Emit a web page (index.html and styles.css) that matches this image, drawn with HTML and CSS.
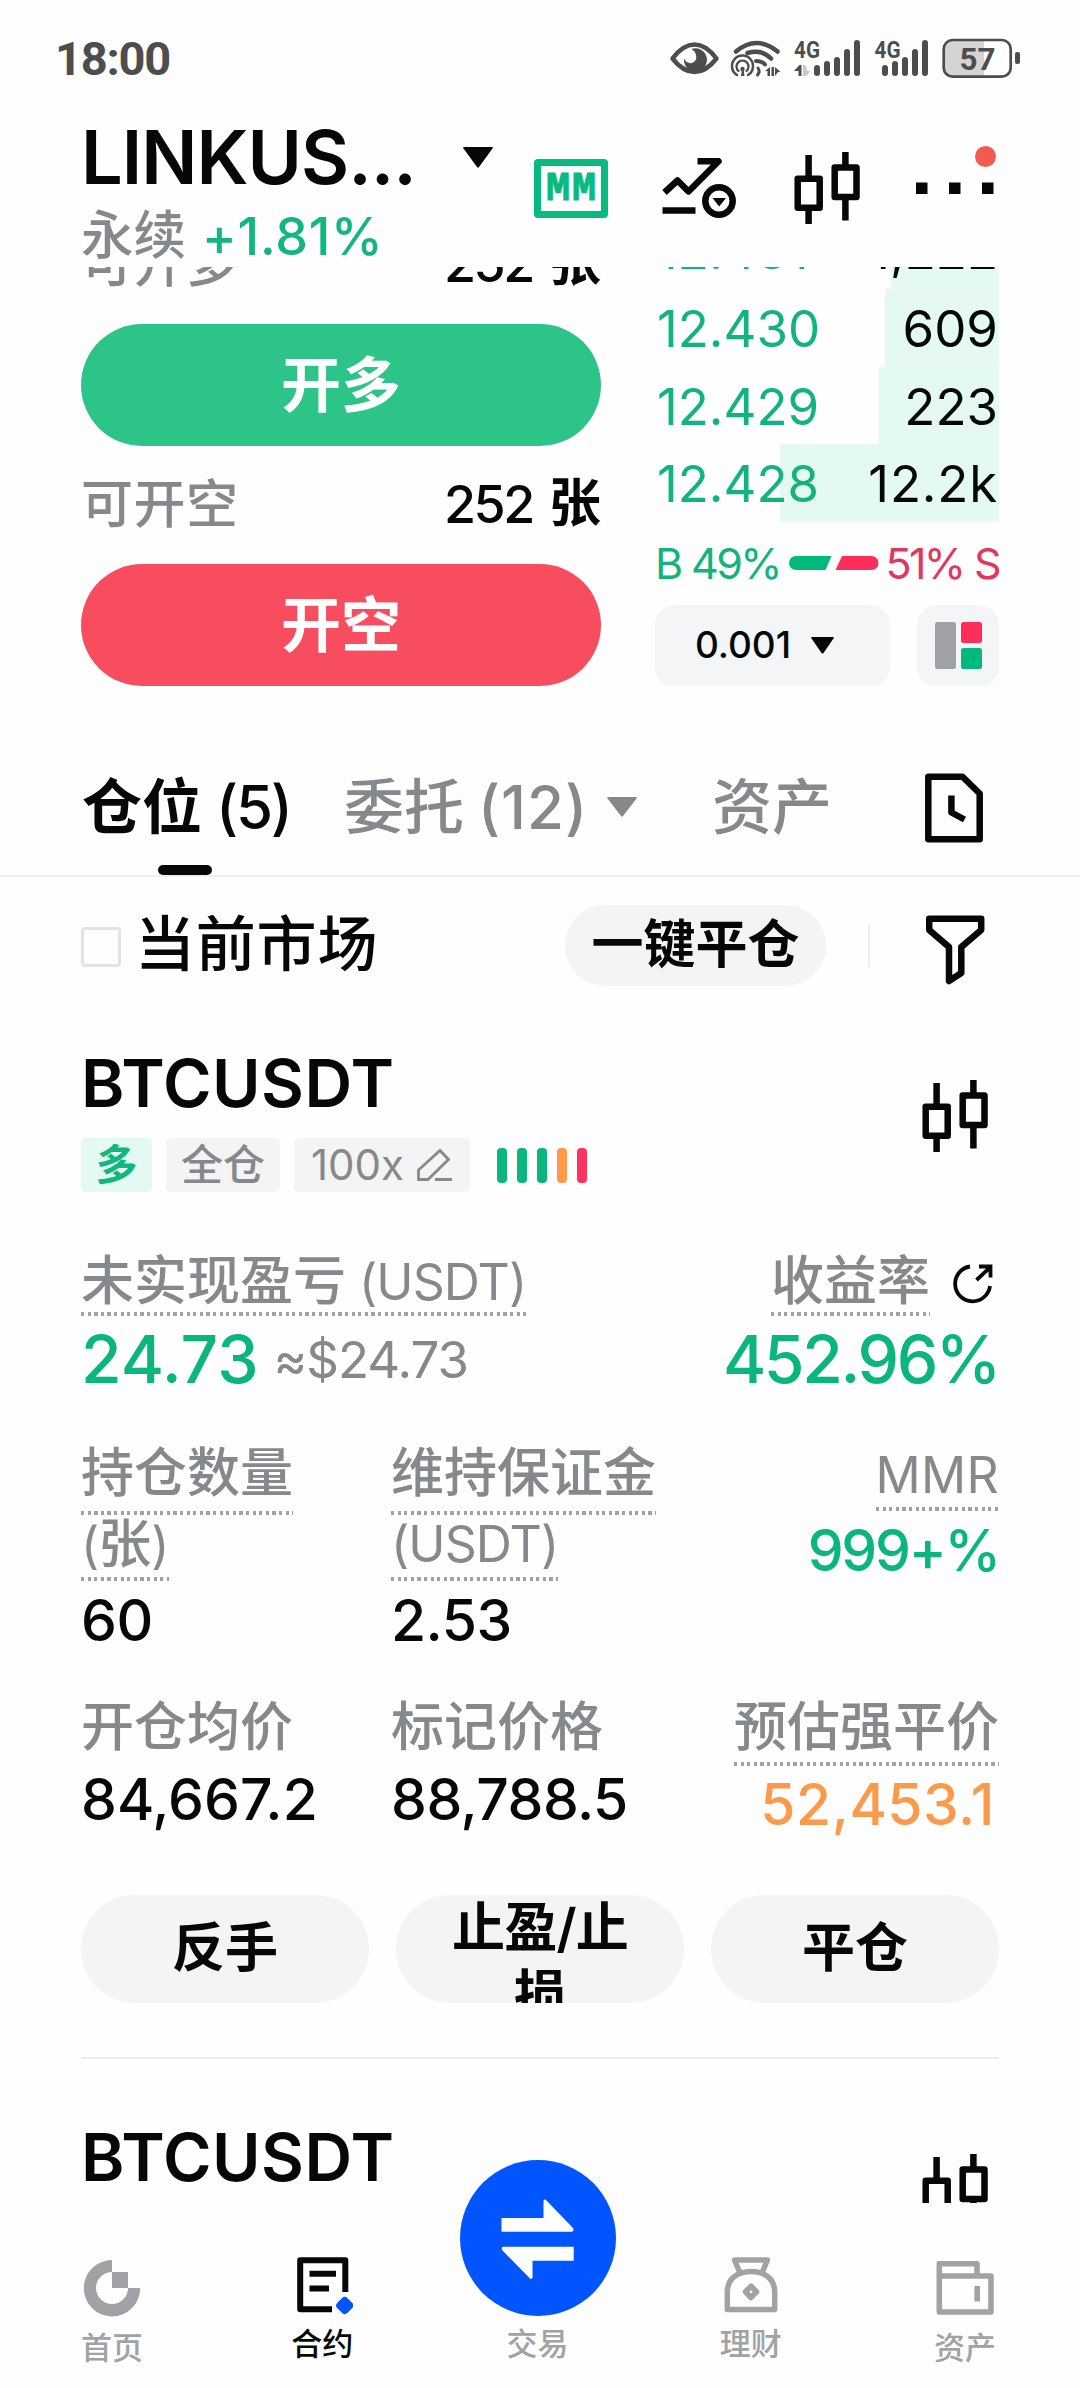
FILE: index.html
```html
<!DOCTYPE html>
<html lang="zh-CN">
<head>
<meta charset="utf-8">
<title>合约</title>
<link rel="stylesheet" href="styles.css">
</head>
<body>
<svg class="defs" width="0" height="0">
  <symbol id="candles" viewBox="794 152 66 72">
    <g fill="none" stroke="#050807" stroke-width="6.5" stroke-linejoin="round">
      <rect x="797.7" y="178.7" width="22" height="29"/>
      <rect x="834.7" y="167.4" width="21.8" height="29.6"/>
      <path d="M808.6 155v23M808.6 208v16M845.4 152v15M845.4 197v23.5"/>
    </g>
  </symbol>
</svg>
<div class="app">
  <div class="status">
    <span class="clock">18:00</span>
    <svg class="status-icons" width="352" height="44" viewBox="670 36 352 44">
      <g fill="none" stroke="#4d4d4d" stroke-linecap="round">
        <path d="M673.500 57.500Q684 43.500 695.500 43.500T717.500 57.500Q707 71 695.500 71T673.500 57.500Z" stroke-width="4.500" stroke-linejoin="round"/>
        <path d="M737 50.500Q757.500 33.500 778.500 50.500" stroke-width="4.500"/>
        <path d="M748.500 52Q763 48 772 57.500" stroke-width="4.500"/>
        <path d="M757 60Q763 60 766 63.500" stroke-width="4"/>
        <path d="M738 74A10.500 10.500 0 1 1 749 74" stroke-width="2.500"/>
        <path d="M739.500 70A6 6 0 1 1 747.500 70" stroke-width="2.300"/>
        <path d="M759 67q2.500 3.500-.5 7" stroke-width="3"/>
      </g>
      <g fill="#4d4d4d">
        <path d="M692.500 48A11.500 11.500 0 1 1 685 57.500Q688 63 693 62Q698.500 60 697 54Q696 50 692.500 48Z"/>
        <circle cx="743.500" cy="68" r="2.200"/>
        <path d="M743 68h1.500l1 7h-3.500zM766 70l5-4v9h-2.500v-5zM776 66l5.500 5h-2.500l-3 4zM772.500 66h2.500v9h-2.500zM795 70l5.500-6h2v11h-3v-5z"/>
        <path d="M804 64h2.500l2 6h3l-4 5h-3.500z" fill="#c9c9c9"/>
        <rect x="815" y="64" width="6" height="11" rx="3"/>
        <rect x="825" y="60" width="6" height="15" rx="3"/>
        <rect x="835" y="56" width="6" height="19" rx="3"/>
        <rect x="845" y="48" width="6" height="27" rx="3"/>
        <rect x="855" y="39" width="6" height="36" rx="3"/>
        <rect x="883" y="64" width="6" height="11" rx="3"/>
        <rect x="893" y="60" width="6" height="15" rx="3"/>
        <rect x="903" y="56" width="6" height="19" rx="3"/>
        <rect x="913" y="48" width="6" height="27" rx="3"/>
        <rect x="923" y="39" width="6" height="36" rx="3"/>
        <text x="795" y="56.500" class="net" textLength="26" lengthAdjust="spacingAndGlyphs">4G</text>
        <text x="875.500" y="56.500" class="net" textLength="26" lengthAdjust="spacingAndGlyphs">4G</text>
        <rect x="1016" y="51" width="5" height="12" rx="2"/>
      </g>
      <path d="M985 39.500H953a8 8 0 0 0-8 8V67a8 8 0 0 0 8 8h32z" fill="#d4d4d4"/>
      <rect x="944.700" y="39" width="67" height="36.700" rx="9" fill="none" stroke="#4d4d4d" stroke-width="2.700"/>
      <text x="960.500" y="69" class="battery" textLength="36" lengthAdjust="spacingAndGlyphs">57</text>
    </svg>
  </div>

  <header class="header">
    <div class="pair">
      <div class="pair-name">
        <h1>LINKUS...</h1>
        <svg width="30" height="21" viewBox="0 0 30 21"><path d="M1 0h28q1.500 0 .5 1.500L16 20q-1 1.500-2 0L.5 1.500Q-.5 0 1 0z" fill="#050807"/></svg>
      </div>
      <div class="pair-sub"><span class="muted">永续</span><span class="change">+1.81%</span></div>
    </div>
    <div class="mm">MM</div>
    <svg class="trend" width="74" height="60" viewBox="662 158 74 60">
      <g fill="none" stroke="#050807" stroke-width="6.500">
        <path d="M664.500 192.500L677.500 180.500L688.500 191.500L718.500 161.200H697.500" stroke-linejoin="round"/>
        <path d="M662.500 210.600h33"/>
        <circle cx="719" cy="201" r="13.700"/>
      </g>
      <path d="M712.500 198h13.500l-6.800 8.500z" fill="#050807"/>
    </svg>
    <svg class="head-candles" width="66" height="72"><use href="#candles"/></svg>
    <svg class="more" width="80" height="48" viewBox="916 146 80 48">
      <path d="M916 182.500h11.500v11.500h-11.500zM949 182.500h11.500v11.500h-11.500zM982 182.500h11.500v11.500h-11.500z" fill="#050807"/>
      <circle cx="985.500" cy="156.500" r="10.500" fill="#f35b50"/>
    </svg>
  </header>

  <main class="scroll">
    <section class="trade">
      <div class="order-form">
        <div class="avail"><span class="muted">可开多</span><span class="qty"><span>252</span><b>张</b></span></div>
        <button class="big long">开多</button>
        <div class="avail avail--short"><span class="muted">可开空</span><span class="qty"><span>252</span><b>张</b></span></div>
        <button class="big short">开空</button>
      </div>
      <div class="book">
        <div class="level d1"><span>12.431</span><span>1,222</span></div>
        <div class="level d2"><span>12.430</span><span>609</span></div>
        <div class="level d3"><span>12.429</span><span>223</span></div>
        <div class="level d4"><span>12.428</span><span class="k">12.2k</span></div>
        <div class="ratio">
          <span class="buy">B 49%</span>
          <svg width="90" height="14" viewBox="0 0 90 14"><path d="M7 0h35.500l-6 14H7A7 7 0 0 1 7 0z" fill="#00b97a"/><path d="M53 0h29.500a7 7 0 0 1 0 14H46.500z" fill="#ff2d5a"/></svg>
          <span class="sell">51% S</span>
        </div>
        <div class="book-tools">
          <div class="tick"><span>0.001</span><svg width="23" height="17" viewBox="0 0 23 17"><path d="M1 0h21q1.500 0 .5 1.500L12.500 16q-1 1-2 0L.5 1.500Q-.5 0 1 0z" fill="#050807"/></svg></div>
          <div class="view"><svg width="47" height="47" viewBox="0 0 47 47"><rect width="21" height="47" rx="2.500" fill="#9fa1a6"/><rect x="26" width="21" height="21" rx="2.500" fill="#ff2d5a"/><rect x="26" y="26" width="21" height="21" rx="2.500" fill="#00b97a"/></svg></div>
        </div>
      </div>
    </section>

    <nav class="tabs">
      <div class="tab active"><span>仓位</span><span class="n n5">(5)</span></div>
      <div class="tab orders"><span>委托</span><span class="n n12">(12)</span><svg width="30" height="20" viewBox="0 0 30 20"><path d="M1 0h28q1.500 0 .5 1.500L16 19q-1 1.500-2 0L.5 1.500Q-.5 0 1 0z" fill="#86898c"/></svg></div>
      <div class="tab assets"><span>资产</span></div>
      <svg class="history" width="59" height="70" viewBox="926 773 59 70"><g fill="none" stroke="#050807" stroke-width="6.500" stroke-linejoin="round"><path d="M929.300 776.700H963.500L980.700 793.500V839.200H929.300Z"/><path d="M952.400 795.500V812.500L965.500 819.500"/></g></svg>
    </nav>

    <div class="filters">
      <span class="check"></span><span class="cur">当前市场</span>
      <button class="close-all">一键平仓</button>
      <i class="sep"></i>
      <svg class="funnel" width="59" height="70" viewBox="926 915.500 59 70"><path d="M929.200 919.200H981.200V930.500L961.300 947.500V973.500L949 981.500V947.500L929.200 930.500Z" fill="none" stroke="#050807" stroke-width="6.500" stroke-linejoin="round"/></svg>
    </div>

    <article class="position">
      <div class="pos-head">
        <div>
          <h2>BTCUSDT</h2>
          <div class="tags">
            <span class="tag side">多</span>
            <span class="tag cross">全仓</span>
            <span class="tag lev"><span>100x</span><svg width="37" height="34" viewBox="418 1146 37 34"><path d="M420.500 1177.500V1168L442 1148.500L450.500 1157.500L430 1177.500ZM437 1177.500H454" fill="none" stroke="#86898c" stroke-width="2.800"/></svg></span>
            <span class="risk"><i></i><i></i><i></i><i class="o"></i><i class="r"></i></span>
          </div>
        </div>
        <svg class="card-candles" width="66" height="72"><use href="#candles"/></svg>
      </div>

      <div class="pnl">
        <div>
          <div class="label wide"><span class="dotted"><span>未实现盈亏</span><span class="lat g">(USDT)</span></span></div>
          <div class="pnl-value"><strong>24.73</strong><span class="approx">≈$24.73</span></div>
        </div>
        <div class="end">
          <div class="label wide"><span class="dotted">收益率</span><svg class="share" width="40" height="40" viewBox="953 1264 40 40"><path d="M970 1266.500A17.500 17.500 0 1 0 990 1286M976.500 1280L990 1267.500M979 1266.500H990.500V1277.500" fill="none" stroke="#050807" stroke-width="3.800"/></svg></div>
          <div class="pnl-value"><strong class="rate">452.96%</strong></div>
        </div>
      </div>

      <div class="grid g1">
        <div><div class="label two"><span class="dotted">持仓数量</span><br><span class="dotted"><span class="lat">(</span>张<span class="lat">)</span></span></div><div class="value">60</div></div>
        <div><div class="label two"><span class="dotted">维持保证金</span><br><span class="dotted lat">(USDT)</span></div><div class="value">2.53</div></div>
        <div class="end"><div class="label mmr"><span class="dotted lat">MMR</span></div><div class="value ok">999+%</div></div>
      </div>
      <div class="grid g2">
        <div><div class="label">开仓均价</div><div class="value entry">84,667.2</div></div>
        <div><div class="label">标记价格</div><div class="value">88,788.5</div></div>
        <div class="end"><div class="label liq"><span class="dotted">预估强平价</span></div><div class="value warn">52,453.1</div></div>
      </div>

      <div class="actions">
        <button><span>反手</span></button>
        <button class="tpsl"><span>止盈/止<br>损</span></button>
        <button><span>平仓</span></button>
      </div>
    </article>

    <article class="position next">
      <div class="pos-head">
        <h2>BTCUSDT</h2>
        <svg class="card-candles" width="66" height="72"><use href="#candles"/></svg>
      </div>
    </article>
  </main>

  <nav class="bottom">
    <a class="item low"><svg width="62" height="60" viewBox="82 2257 62 60"><path d="M113 2260A28.200 28.200 0 1 0 141.200 2288H129A16 16 0 1 1 113 2272Z" fill="#a0a2a5"/><path d="M113 2272h16v16h-16z" fill="#a0a2a5"/></svg><span>首页</span></a>
    <a class="item on"><svg width="62" height="60" viewBox="292 2257 62 60"><path d="M333 2309.200H301.200V2260.300H346.300V2292M310.500 2273.800H337M310.500 2288.500H330" fill="none" stroke="#050807" stroke-width="6" stroke-linejoin="round"/><path d="M345.700 2301l4.500 4.500l-4.500 4.500l-4.500-4.500z" fill="#0055ff" stroke="#0055ff" stroke-width="8" stroke-linejoin="round"/></svg><span>合约</span></a>
    <a class="item trade-item"><svg width="156" height="156" viewBox="461 2160 156 156"><circle cx="539" cy="2238" r="78" fill="#0055ff"/><path d="M502.500 2218H544.500V2201Q545.500 2198.500 547.500 2200.500L574 2228Q575.500 2231.700 572.500 2231.700H502.500ZM574.700 2246.700V2260.700H533.500V2277.500Q532.500 2280 530.500 2278L503.500 2250.500Q501.500 2246.700 504.500 2246.700Z" fill="#fff"/></svg><span>交易</span></a>
    <a class="item"><svg width="62" height="60" viewBox="721 2257 62 60"><path d="M728.300 2309.500V2292C728.300 2279 738 2271.500 752 2271.500S775.700 2279 775.700 2292V2309.500ZM741 2273L735.500 2260H768.500L763 2273M752 2286.200L757.500 2291.800L752 2297.500L746.500 2291.800Z" fill="none" stroke="#a0a2a5" stroke-width="5.500" stroke-linejoin="round"/></svg><span>理财</span></a>
    <a class="item low"><svg width="62" height="60" viewBox="935 2257 62 60"><path d="M940.300 2276V2312H992V2276ZM940.300 2276V2263.800H978V2276M978.200 2286V2301.500" fill="none" stroke="#a0a2a5" stroke-width="5.600" stroke-linejoin="round"/></svg><span>资产</span></a>
  </nav>
</div>
</body>
</html>
```
FILE: styles.css
```css
* { box-sizing: border-box; }
body {
  margin: 0;
  background: #fefefe;
  color: #050807;
  font-family: Inter, "Noto Sans CJK SC", sans-serif;
  line-height: 1.2;
}
h1, h2 { margin: 0; }
button {
  border: 0;
  padding: 0;
  font-family: inherit;
  line-height: inherit;
  color: inherit;
}
svg { display: block; flex: none; }
.defs { position: absolute; }
.app {
  display: flex;
  flex-direction: column;
  width: 1080px;
  height: 2388px;
  overflow: hidden;
}
.muted { color: #86898c; font-weight: 500; }

/* status bar */
.status {
  display: flex;
  justify-content: space-between;
  align-items: center;
  height: 110px;
  padding: 8px 59px 0 55px;
}
.clock {
  font: 700 47px/50px Roboto, sans-serif;
  letter-spacing: -1.200px;
  color: #4d4d4d;
}
.net { font: 700 24px Roboto, sans-serif; }
.battery { font: 700 32px Roboto, sans-serif; fill: #4d4d4d; }

/* header */
.header {
  display: flex;
  height: 157px;
  padding-left: 81px;
  flex: none;
}
.pair { width: 453px; }
.pair-name {
  display: flex;
  justify-content: space-between;
  align-items: center;
  height: 94px;
  padding-right: 41px;
}
.pair-name h1 { font-size: 74px; font-weight: 600; line-height: 94px; letter-spacing: -1px; }
.pair-sub { display: flex; gap: 16px; line-height: 63px; font-size: 52px; }
.pair-sub .muted { font-size: 52.500px; line-height: 63px; }
.change { color: #12b77e; font-weight: 500; letter-spacing: .8px; line-height: 65px; }
.mm {
  width: 74px;
  height: 59px;
  margin-top: 49px;
  border: 7px solid #07bb7f;
  border-radius: 4px;
  color: #07bb7f;
  font: 700 40px/47px "Liberation Mono", monospace;
  letter-spacing: 2px;
  padding-left: 2px;
  text-align: center;
  -webkit-text-stroke: 1px #07bb7f;
}
.trend { margin: 48px 0 0 54px; }
.head-candles { margin: 42px 0 0 58px; }
.more { margin: 36px 0 0 56px; }

.scroll { flex: 1; min-height: 0; overflow: hidden; }

/* order form and book */
.trade {
  display: flex;
  justify-content: space-between;
  height: 419px;
  padding: 0 81px;
  overflow: hidden;
}
.order-form { width: 520px; margin-top: -63px; }
.avail {
  display: flex;
  justify-content: space-between;
  align-items: center;
  height: 120px;
  font-size: 52px;
}
.avail .muted { letter-spacing: .5px; }
.avail--short { height: 118px; }
.qty { display: flex; gap: 16px; font-weight: 500; }
.qty span { letter-spacing: -2.400px; padding-top: 1px; }
.big {
  display: block;
  width: 520px;
  height: 122px;
  border-radius: 61px;
  color: #fff;
  font-size: 60px;
  font-weight: 700;
  line-height: 122px;
}
.long { background: #2cc488; }
.short { background: #f84c5f; }
.book { width: 344px; margin-top: -55.700px; }
.level {
  display: flex;
  justify-content: space-between;
  height: 77.600px;
  padding: 0 1px 0 2px;
  font-size: 51px;
  line-height: 80px;
  background: linear-gradient(#e4f9f2, #e4f9f2) right / 108px 100% no-repeat;
}
.level span:first-child { color: #12b37d; }
.d2 { background-size: 114px 100%; }
.d3 { background-size: 120px 100%; }
.d4 { background-size: 219px 100%; }
.k { letter-spacing: .8px; }
.ratio {
  display: flex;
  justify-content: space-between;
  align-items: center;
  height: 83px;
  font-size: 43px;
  letter-spacing: -2.600px;
  word-spacing: 1px;
  white-space: nowrap;
}
.ratio span { padding-top: 1px; }
.ratio svg { margin: 0 -2px 0 0; }
.buy { color: #12b37d; }
.sell { color: #e3365e; }
.book-tools { display: flex; justify-content: space-between; }
.tick, .view {
  display: flex;
  align-items: center;
  justify-content: center;
  height: 82px;
  border-radius: 20px;
  background: #f4f5f7;
}
.tick { width: 235px; padding-right: 16px; gap: 20px; font-size: 37px; font-weight: 500; }
.view { width: 82px; }

/* tabs */
.tabs {
  display: flex;
  height: 191px;
  padding: 52px 81px 0;
  border-bottom: 2px solid #eee;
}
.tab {
  position: relative;
  display: flex;
  align-items: center;
  height: 137px;
  font-size: 60px;
  font-weight: 500;
  color: #86898c;
}
.tab.active { color: #050807; width: 263px; font-weight: 600; padding-left: 1px; }
.tab.active::after {
  content: "";
  position: absolute;
  left: 77px;
  bottom: 0;
  width: 54px;
  height: 10px;
  border-radius: 5px;
  background: #050807;
}
.n { margin-left: 14px; font-weight: 500; }
.n5 { letter-spacing: -2.200px; }
.n12 { letter-spacing: 1px; }
.orders { width: 368px; }
.orders svg { margin-left: 19px; }
.assets { width: 213px; }
.history { margin-top: 35px; }

/* filter row */
.filters {
  display: flex;
  align-items: center;
  height: 136px;
  padding: 0 81px;
}
.check {
  width: 40px;
  height: 40px;
  margin-top: 4px;
  border: 3px solid #e3e3e3;
  border-radius: 4px;
}
.cur { width: 430px; margin-left: 14px; font-size: 60px; font-weight: 500; letter-spacing: .8px; line-height: 70px; margin-top: -2px; }
.close-all {
  width: 261px;
  height: 81px;
  border-radius: 41px;
  background: #f4f4f4;
  font-size: 52px;
  font-weight: 600;
}
.sep { width: 2px; height: 43px; margin: 0 56px 0 42px; background: #eee; }
.funnel { margin-top: 10px; }

/* position card */
.position { margin: 0 81px; padding-top: 35px; }
.pos-head { display: flex; justify-content: space-between; }
.card-candles { margin: 32px 11px 0 0; }
h2 { font-size: 66px; font-weight: 600; line-height: 70px; letter-spacing: .4px; }
.tags { display: flex; align-items: center; gap: 14px; margin-top: 20px; }
.tag {
  display: flex;
  align-items: center;
  justify-content: center;
  height: 54px;
  border-radius: 5px;
  background: #f4f4f4;
  color: #86898c;
  font-size: 42px;
}
.side { width: 71px; background: #e4f9f2; color: #12b77e; font-weight: 700; }
.cross { width: 114px; font-weight: 500; }
.lev { width: 176px; gap: 12px; }
.risk { display: flex; gap: 10px; margin-left: 13px; }
.risk i { width: 10px; height: 35px; border-radius: 4px; background: #0ab67c; }
.risk .o { background: #ff9a4b; }
.risk .r { background: #fb345f; }

.pnl { display: flex; justify-content: space-between; margin-top: 58px; }
.label { font-size: 53px; font-weight: 500; line-height: 66px; color: #86898c; white-space: nowrap; }
.lat { font-size: 50px; font-weight: 400; letter-spacing: -.9px; }
.g { margin-left: 13px; }
.dotted {
  display: inline-block;
  background: repeating-linear-gradient(90deg, #a0a2a4 0 3.300px, transparent 3.300px 6.600px) left bottom / 100% 4px no-repeat;
}
.wide .dotted { height: 66px; line-height: 63px; vertical-align: top; }
.end { text-align: right; }
.end .label.wide { display: flex; justify-content: flex-end; }
.share { margin: 14px 6px 0 23px; }
.pnl-value { display: flex; align-items: center; height: 88px; }
.end .pnl-value { justify-content: flex-end; }
.pnl-value strong { font-size: 66px; font-weight: 500; color: #0ab67c; }
.pnl-value .rate { letter-spacing: -2.400px; }
.approx { margin-left: 15px; font-size: 51px; letter-spacing: -1px; color: #86898c; }

.grid { display: grid; grid-template-columns: 310px 310px 298px; }
.g1 { margin-top: 36px; height: 256px; }
.value { font-size: 57px; line-height: 66px; font-weight: 500; letter-spacing: -.5px; }
.two { height: 141px; }
.two .dotted { height: 75px; line-height: 67px; vertical-align: top; }
.two .dotted:last-child { height: 66px; line-height: 58px; }
.g1 .value { margin-top: 7px; }
.mmr .dotted { height: 71px; line-height: 71px; letter-spacing: .3px; vertical-align: top; }
.g1 .ok { margin-top: 7px; letter-spacing: -2.200px; color: #0ab67c; }
.g2 { height: 199px; }
.g2 .label { line-height: 62px; }
.g2 .value { margin-top: 9px; }
.g2 .entry { letter-spacing: 0; }
.liq .dotted { height: 70px; }
.g2 .warn { color: #fb9a4b; margin-top: 6px; padding-right: 4px; letter-spacing: .5px; }

.actions { display: flex; justify-content: space-between; }
.actions button {
  width: 288px;
  height: 108px;
  border-radius: 54px;
  background: #f4f4f4;
  font-size: 53px;
  font-weight: 600;
  overflow: hidden;
}
.tpsl span { display: block; line-height: 67px; height: 108px; letter-spacing: -.8px; }
.next { margin-top: 54px; padding-top: 63px; border-top: 2px solid #eee; }

/* bottom navigation */
.bottom {
  display: flex;
  justify-content: space-between;
  flex: none;
  height: 185px;
  padding: 0 84px 0 81px;
  background: #fefefe;
}
.item {
  display: flex;
  flex-direction: column;
  align-items: center;
  width: 62px;
  padding-top: 54px;
  color: #a0a2a5;
  font-size: 31px;
  font-weight: 500;
  line-height: 40px;
  white-space: nowrap;
}
.item span { margin-top: 7px; }
.low span { margin-top: 11px; }
.on { color: #050807; margin-left: -4px; }
.trade-item { width: 156px; margin: -43px -48px 0 -46px; padding-top: 0; }
.trade-item span { margin-top: 8px; }
```
